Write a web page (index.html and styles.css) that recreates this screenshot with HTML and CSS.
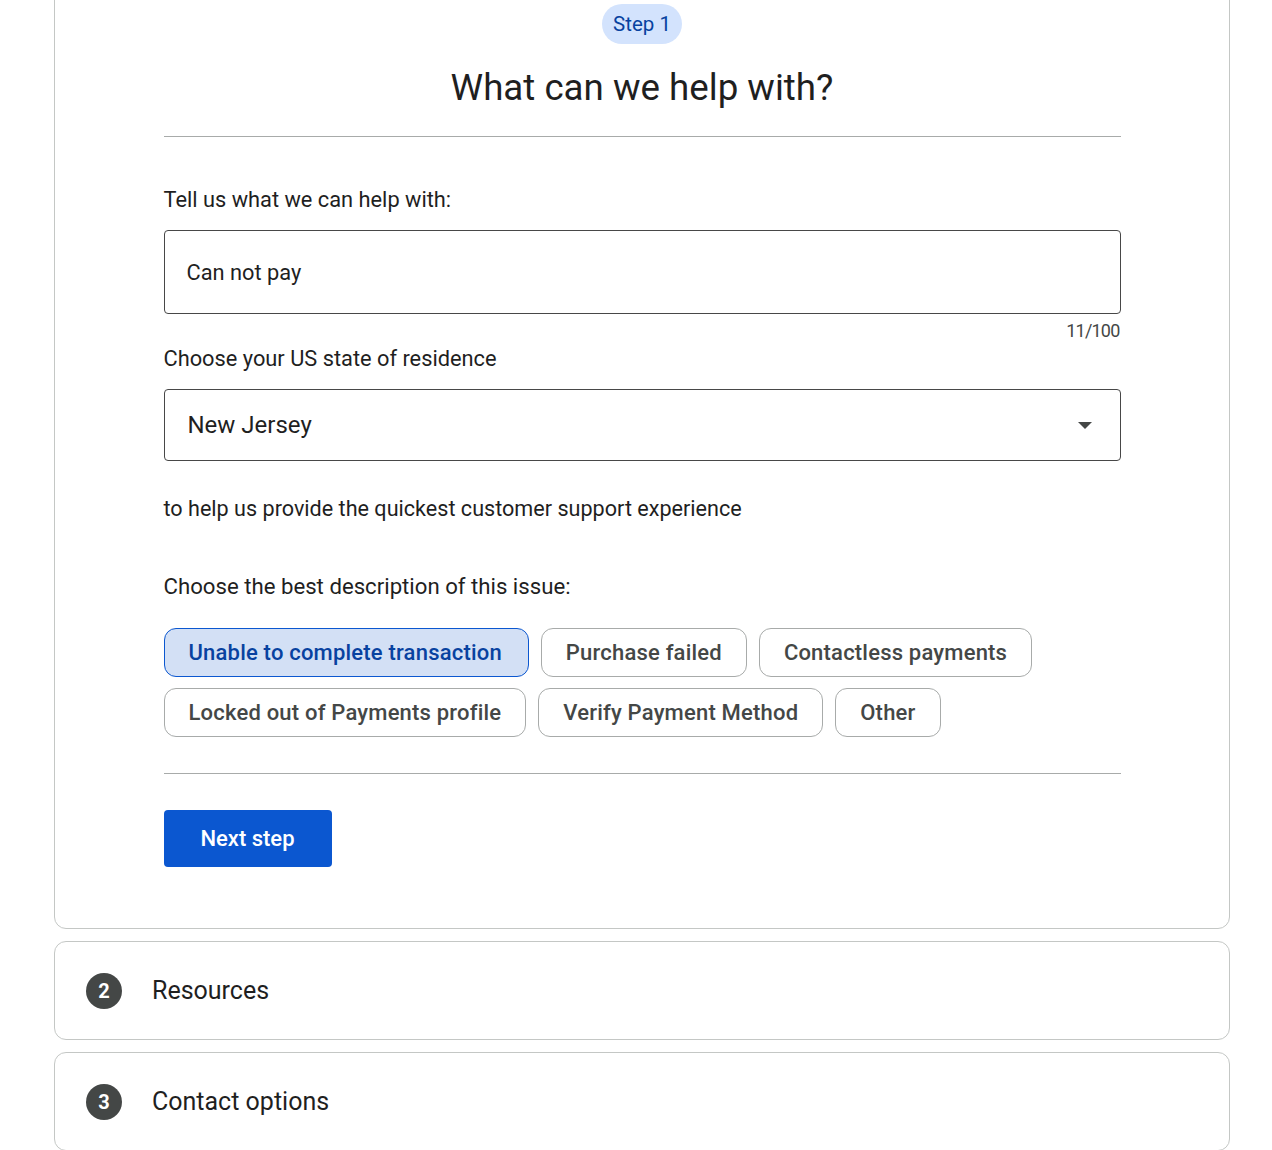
FILE: index.html
```html
<!DOCTYPE html>
<html lang="en">
<head>
<meta charset="utf-8">
<title>What can we help with?</title>
<link rel="stylesheet" href="styles.css">
</head>
<body>
<div class="page">
  <section class="card card-main">
    <div class="step-wrap"><span class="step-badge">Step 1</span></div>
    <h1 class="title">What can we help with?</h1>
    <div class="content">
      <hr class="divider divider-top">
      <label class="label label-first">Tell us what we can help with:</label>
      <div class="text-input">Can not pay</div>
      <div class="counter">11/100</div>
      <label class="label label-state">Choose your US state of residence</label>
      <div class="select">
        <span class="select-value">New Jersey</span>
        <svg class="select-arrow" width="14" height="7" viewBox="0 0 14 7"><path d="M0 0 L14 0 L7 7 Z" fill="#444746"/></svg>
      </div>
      <p class="hint">to help us provide the quickest customer support experience</p>
      <p class="label label-issue">Choose the best description of this issue:</p>
      <div class="chips">
        <span class="chip chip-selected">Unable to complete transaction</span>
        <span class="chip">Purchase failed</span>
        <span class="chip">Contactless payments</span>
        <span class="chip">Locked out of Payments profile</span>
        <span class="chip">Verify Payment Method</span>
        <span class="chip">Other</span>
      </div>
      <hr class="divider divider-bottom">
      <button class="next-btn" type="button">Next step</button>
    </div>
  </section>
  <section class="card card-step">
    <span class="step-num">2</span>
    <span class="step-title">Resources</span>
  </section>
  <section class="card card-step">
    <span class="step-num">3</span>
    <span class="step-title">Contact options</span>
  </section>
</div>
</body>
</html>
```

FILE: styles.css
```css
html, body {
  margin: 0;
  padding: 0;
  background: #ffffff;
}
body {
  font-family: Roboto, "Noto Sans", Arial, sans-serif;
  color: #1f1f1f;
  overflow: hidden;
}
.page {
  width: 1176px;
  margin-left: 54px;
  display: flex;
  flex-direction: column;
  gap: 12px;
}
.card {
  border: 1px solid #c4c7c5;
  border-radius: 12px;
  background: #fff;
  box-sizing: border-box;
}
.card-main {
  margin-top: -13px;
  padding: 16px 0 61px;
}
.step-wrap {
  display: flex;
  justify-content: center;
}
.step-badge {
  display: inline-block;
  height: 40px;
  line-height: 40px;
  padding: 0 11px;
  border-radius: 20px;
  background: #d3e3fd;
  color: #0842a0;
  font-size: 20.5px;
}
.title {
  margin: 22px 0 0;
  text-align: center;
  font-size: 36.7px;
  line-height: 44px;
  font-weight: 400;
  color: #1f1f1f;
}
.content {
  width: 957px;
  margin: 0 auto;
}
.divider {
  border: none;
  border-top: 1px solid #a8abaa;
  margin: 0;
}
.divider-top {
  margin-top: 26px;
}
.label {
  display: block;
  font-size: 21.8px;
  line-height: 28px;
  color: #1f1f1f;
  margin: 0;
}
.label-first {
  margin-top: 49px;
}
.text-input {
  margin-top: 16px;
  height: 84px;
  box-sizing: border-box;
  border: 1px solid #474747;
  border-radius: 4px;
  padding: 0 22px;
  display: flex;
  align-items: center;
  font-size: 21.8px;
  color: #1f1f1f;
}
.counter {
  margin-top: 7px;
  text-align: right;
  font-size: 18px;
  line-height: 20px;
  letter-spacing: -0.8px;
  color: #444746;
  padding-right: 1px;
}
.label-state {
  margin-top: 4px;
}
.select {
  margin-top: 16px;
  height: 72px;
  box-sizing: border-box;
  border: 1px solid #474747;
  border-radius: 4px;
  padding: 0 28px 0 23px;
  display: flex;
  align-items: center;
  justify-content: space-between;
}
.select-value {
  font-size: 24px;
  color: #1f1f1f;
}
.hint {
  margin: 34px 0 0;
  font-size: 21.6px;
  line-height: 28px;
  color: #1f1f1f;
}
.label-issue {
  margin-top: 49px;
  font-size: 22.2px;
}
.chips {
  margin-top: 28px;
  display: flex;
  flex-wrap: wrap;
  column-gap: 12px;
  row-gap: 11px;
  width: 880px;
}
.chip {
  display: inline-flex;
  align-items: center;
  height: 49px;
  box-sizing: border-box;
  padding: 0 24px;
  border: 1px solid #a8abaa;
  border-radius: 12px;
  font-size: 22px;
  font-weight: 500;
  letter-spacing: 0.2px;
  color: #444746;
}
.chip-selected {
  padding-right: 26px;
  background: #d3e0f5;
  border-color: #0b57d0;
  color: #0842a0;
}
.divider-bottom {
  margin-top: 36px;
}
.next-btn {
  margin-top: 36px;
  width: 168px;
  height: 57px;
  border: none;
  border-radius: 4px;
  background: #0b57d0;
  color: #ffffff;
  font-family: inherit;
  font-size: 22px;
  font-weight: 500;
  display: block;
  cursor: pointer;
}
.card-step {
  height: 99px;
  padding-left: 31px;
  display: flex;
  align-items: center;
}
.step-num {
  width: 36px;
  height: 36px;
  border-radius: 50%;
  background: #444746;
  color: #fff;
  font-size: 20px;
  font-weight: 700;
  display: flex;
  align-items: center;
  justify-content: center;
}
.step-title {
  margin-left: 30px;
  font-size: 25px;
  color: #1f1f1f;
}
```
